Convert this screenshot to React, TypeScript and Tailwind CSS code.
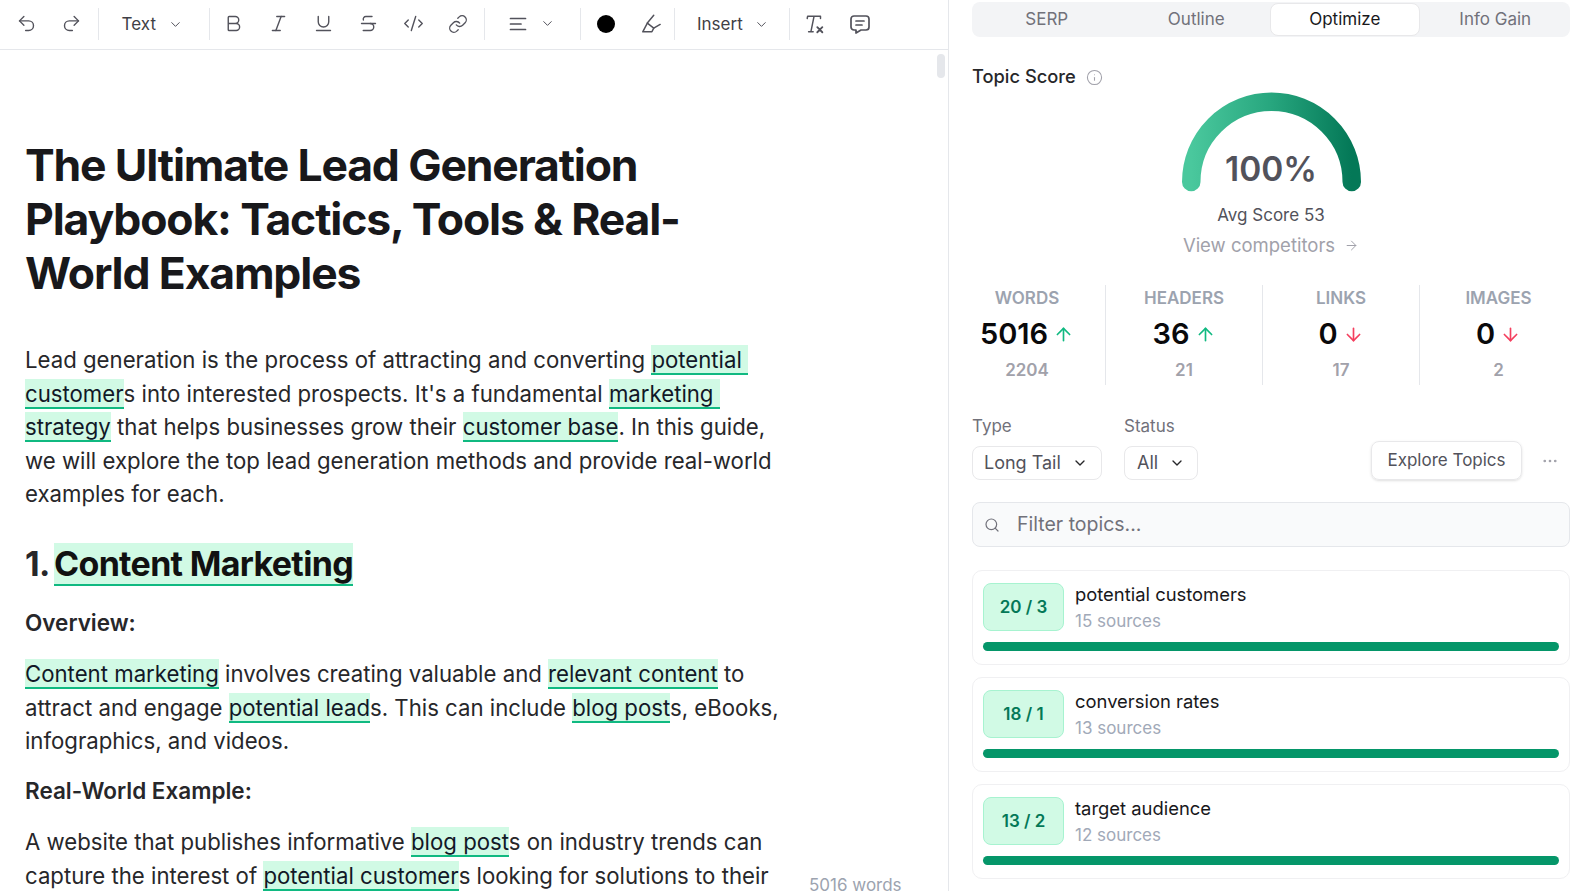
import { useId, type ReactNode } from "react";
import {
  ArrowDown,
  ArrowRight,
  ArrowUp,
  Bold,
  ChevronDown,
  CodeXml,
  Info,
  Italic,
  Link,
  MoreHorizontal,
  Redo2,
  Search,
  Strikethrough,
  Underline,
  Undo2,
} from "lucide-react";
import { TbMessage } from "react-icons/tb";

function Mark({ children }: { children: ReactNode }) {
  return (
    <mark className="bg-[#d1fae5] text-[#111827] border-b-2 border-[#10b981] pt-px whitespace-pre-wrap">{children}</mark>
  );
}

function Sep() {
  return <div className="w-px h-8 bg-[#e5e7eb] shrink-0" />;
}

function Btn({ children }: { children: ReactNode }) {
  return <div className="w-[44.8px] h-8 flex items-center justify-center text-[#52525b] shrink-0">{children}</div>;
}

function Toolbar() {
  return (
    <div className="h-[50px] border-b border-[#e5e7eb] flex items-center pl-1 pb-[2px] shrink-0">
      <Btn><Undo2 size={21} strokeWidth={1.6} /></Btn>
      <Btn><Redo2 size={21} strokeWidth={1.6} /></Btn>
      <div className="w-[4px]" />
      <Sep />
      <div className="flex items-center w-[110px] pl-[23px] pt-[2px] text-[17px] text-[#3f3f46]">
        Text
        <ChevronDown size={15} strokeWidth={1.6} className="ml-[12px] text-[#52525b]" />
      </div>
      <Sep />
      <div className="w-[2px]" />
      <Btn><Bold size={21} strokeWidth={1.6} /></Btn>
      <Btn><Italic size={21} strokeWidth={1.6} /></Btn>
      <Btn><Underline size={21} strokeWidth={1.6} /></Btn>
      <Btn><Strikethrough size={21} strokeWidth={1.6} /></Btn>
      <Btn><CodeXml size={21} strokeWidth={1.6} /></Btn>
      <Btn><Link size={20} strokeWidth={1.6} /></Btn>
      <div className="w-[4px]" />
      <Sep />
      <div className="flex items-center w-[95px] pl-[23px] text-[#52525b]">
        <svg width="20" height="20" viewBox="0 0 20 20" fill="none" stroke="currentColor" strokeWidth="1.7" strokeLinecap="round">
          <path d="M2.5 4.5h15M2.5 10h10.5M2.5 15.5h15" />
        </svg>
        <ChevronDown size={15} strokeWidth={1.6} className="ml-[12px]" />
      </div>
      <Sep />
      <div className="w-[2px]" />
      <Btn><div className="size-[18px] rounded-full bg-black" /></Btn>
      <Btn>
        <svg width="22" height="22" viewBox="0 0 24 24" fill="none" stroke="currentColor" strokeWidth="1.6" strokeLinecap="round" strokeLinejoin="round">
          <path d="M15 2.5 8 11l7 5.5 7-4" />
          <path d="M8 11 3 20.5h10l2-4" />
        </svg>
      </Btn>
      <div className="w-[1px]" />
      <Sep />
      <div className="flex items-center w-[114px] pl-[22px] pt-[2px] text-[17px] text-[#3f3f46]">
        Insert
        <ChevronDown size={15} strokeWidth={1.6} className="ml-[11px] text-[#52525b]" />
      </div>
      <Sep />
      <div className="w-[3px]" />
      <Btn>
        <svg width="22" height="22" viewBox="0 0 24 24" fill="none" stroke="currentColor" strokeWidth="1.6" strokeLinecap="round" strokeLinejoin="round">
          <path d="M4 3.5h14M4 3.5 3.5 6M18 3.5V6M11 3.5 7.5 20.5M5 20.5h5" />
          <path d="m14.5 15.5 5.5 5.5M20 15.5 14.5 21" strokeWidth="2" />
        </svg>
      </Btn>
      <Btn><TbMessage size={24} strokeWidth={1.7} /></Btn>
    </div>
  );
}

function Editor() {
  return (
    <div className="relative w-[949px] h-full border-r border-[#e5e7eb] flex flex-col shrink-0 overflow-hidden">
      <Toolbar />
      {/* scrollbar thumb */}
      <div className="absolute top-[54px] right-[3px] w-2 h-6 rounded-full bg-[#e5e7eb]" />
      <div className="w-[790px] pl-[25px] pt-[88px] text-[22.2px] leading-[33.5px] text-[#27272a]">
        <h1 className="text-[44.5px] leading-[54px] font-bold tracking-[-0.026em] text-[#18181b]">
          The Ultimate Lead Generation Playbook: Tactics, Tools &amp; Real-World Examples
        </h1>
        <p className="mt-[43px]">
          Lead generation is the process of attracting and converting <Mark>potential </Mark>
          <Mark>customer</Mark>s into interested prospects. It's a fundamental <Mark>marketing </Mark>
          <Mark>strategy</Mark> that helps businesses grow their <Mark>customer base</Mark>. In this guide, we will
          explore the top lead generation methods and provide real-world examples for each.
        </p>
        <h2 className="mt-[31px] text-[34px] leading-[44px] font-bold tracking-[-0.02em] text-[#27272a]">
          1. <mark className="-ml-[2px] bg-[#d1fae5] text-[#111] border-b-2 border-[#10b981]">Content Marketing</mark>
        </h2>
        <p className="mt-[20px] font-semibold text-[22.5px]">Overview:</p>
        <p className="mt-[18px]">
          <Mark>Content marketing</Mark> involves creating valuable and <Mark>relevant content</Mark> to attract and
          engage <Mark>potential lead</Mark>s. This can include <Mark>blog post</Mark>s, eBooks, infographics, and
          videos.
        </p>
        <p className="mt-[16px] font-semibold text-[22.5px]">Real-World Example:</p>
        <p className="mt-[18px]">
          A website that publishes informative <Mark>blog post</Mark>s on industry trends can capture the interest of{" "}
          <Mark>potential customer</Mark>s looking for solutions to their needs.
        </p>
      </div>
      {/* word count sits on top of the text */}
      <div className="absolute left-[809px] top-[873px] text-[17px] text-[#9ca3af] bg-white">5016 words</div>
    </div>
  );
}

function Stat({ label, value, up, target, last }: { label: string; value: string; up: boolean; target: string; last?: boolean }) {
  return (
    <div className={`h-[100px] flex flex-col items-center ${last ? "" : "border-r border-[#e5e7eb]"}`}>
      <div className="mt-[2px] text-[17px] leading-[22px] font-semibold text-[#9ca3af]">{label}</div>
      <div className="mt-[5px] flex items-center h-[40px]">
        <span className="text-[29px] font-semibold text-[#09090b]">{value}</span>
        {up ? (
          <ArrowUp size={21} strokeWidth={1.9} className="ml-[5px] mt-px text-[#10b981]" />
        ) : (
          <ArrowDown size={21} strokeWidth={1.9} className="ml-[5px] mt-px text-[#f43f5e]" />
        )}
      </div>
      <div className="mt-[5px] text-[17px] leading-[22px] font-semibold text-[#a1a1aa]">{target}</div>
    </div>
  );
}

function TopicCard({ score, title, sources }: { score: string; title: string; sources: string }) {
  return (
    <div className="h-[95px] rounded-[10px] border border-[#f0f0f2] px-[10px] pt-[12px] flex flex-col">
      <div className="flex">
        <div className="w-[81px] h-[48px] rounded-lg bg-[#d1fae5] border border-[#a7f3d0] flex items-center justify-center pt-[2px] text-[17px] font-semibold text-[#047857]">
          {score}
        </div>
        <div className="ml-[11px]">
          <div className="text-[18.4px] leading-[24px] -mt-px text-[#18181b]">{title}</div>
          <div className="text-[17px] leading-[24px] mt-[3px] text-[#a1a9b8]">{sources}</div>
        </div>
      </div>
      <div className="mt-[9px] h-[9px] rounded-full bg-[#059669]" />
    </div>
  );
}

function Gauge() {
  const id = useId();
  return (
    <div className="relative w-[179px] h-[100px] mx-auto">
      <svg width="179" height="100" viewBox="0 0 179 100" fill="none">
        <defs>
          <linearGradient id={id} x1="0" y1="0" x2="1" y2="0">
            <stop offset="0" stopColor="#4ac89d" />
            <stop offset="0.5" stopColor="#27a67e" />
            <stop offset="1" stopColor="#047857" />
          </linearGradient>
        </defs>
        <path d="M9.25 90A80.25 80.25 0 0 1 169.75 90" stroke={`url(#${id})`} strokeWidth="18.5" strokeLinecap="round" />
      </svg>
      <div className="absolute inset-x-0 top-[55px] text-center text-[33.5px] leading-[44px] font-semibold text-[#52525b]">
        100%
      </div>
    </div>
  );
}

function Sidebar() {
  return (
    <div className="flex-1 min-w-0 h-full overflow-hidden">
      <div className="pl-[23px] pr-2 pt-[2px]">
        <div className="h-[35px] rounded-lg bg-[#f3f4f6] grid grid-cols-4 text-[17px] text-[#71717a]">
          <div className="flex items-center justify-center">SERP</div>
          <div className="flex items-center justify-center">Outline</div>
          <div className="flex items-center justify-center bg-white rounded-lg border border-[#e8e8ea] text-[#18181b] m-px -ml-px">Optimize</div>
          <div className="flex items-center justify-center">Info Gain</div>
        </div>
        <div className="mt-[28px] flex items-center h-[24px]">
          <span className="text-[18.3px] font-medium text-[#27272a]">Topic Score</span>
          <Info size={17} strokeWidth={1.5} className="ml-[10px] text-[#a1a1aa]" />
        </div>
        <div className="mt-[3px]">
          <Gauge />
        </div>
        <div className="mt-[11px] text-center text-[17px] leading-[24px] text-[#52525b]">Avg Score 53</div>
        <div className="mt-[6px] flex items-center justify-center text-[18.5px] leading-[24px] text-[#a1a1aa]">
          View competitors
          <ArrowRight size={15} strokeWidth={1.6} className="ml-[9px]" />
        </div>
      </div>

      <div className="mt-[28px] grid grid-cols-4 w-[628px]">
        <Stat label="WORDS" value="5016" up target="2204" />
        <Stat label="HEADERS" value="36" up target="21" />
        <Stat label="LINKS" value="0" up={false} target="17" />
        <Stat label="IMAGES" value="0" up={false} target="2" last />
      </div>

      <div className="pl-[23px] pr-2">
        <div className="mt-[30px] flex items-end">
          <div>
            <div className="text-[17px] leading-[22px] text-[#71717a]">Type</div>
            <div className="mt-[9px] w-[130px] h-[34px] rounded-lg border border-[#e8e8ea] flex items-center pl-[11px] pb-px text-[18px] text-[#52525b]">
              Long Tail
              <ChevronDown size={16} strokeWidth={2} className="ml-[11px] text-[#27272a]" />
            </div>
          </div>
          <div className="ml-[22px]">
            <div className="text-[17px] leading-[22px] text-[#71717a]">Status</div>
            <div className="mt-[9px] w-[74px] h-[34px] rounded-lg border border-[#e8e8ea] flex items-center pl-[12px] pb-px text-[18px] text-[#52525b]">
              All
              <ChevronDown size={16} strokeWidth={2} className="ml-[11px] text-[#27272a]" />
            </div>
          </div>
          <div className="ml-auto w-[151px] h-[39px] rounded-lg border border-[#e8e8ea] shadow-sm flex items-center justify-center text-[17px] text-[#52525b]">
            Explore Topics
          </div>
          <div className="w-[48px] h-[39px] flex items-center justify-end pr-[11px] text-[#a1a1aa]">
            <MoreHorizontal size={18} strokeWidth={1.6} />
          </div>
        </div>

        <div className="mt-[22px] h-[45px] rounded-lg bg-[#f9fafb] border border-[#e5e7eb] flex items-center pl-[11px] text-[19.5px] text-[#71717a]">
          <Search size={16} strokeWidth={1.8} />
          <span className="ml-[17px]">Filter topics...</span>
        </div>

        <div className="mt-[23px] flex flex-col gap-[12px]">
          <TopicCard score="20 / 3" title="potential customers" sources="15 sources" />
          <TopicCard score="18 / 1" title="conversion rates" sources="13 sources" />
          <TopicCard score="13 / 2" title="target audience" sources="12 sources" />
          <TopicCard score="12 / 2" title="lead generation" sources="11 sources" />
        </div>
      </div>
    </div>
  );
}

export default function App() {
  return (
    <div className="w-[1578px] h-[891px] bg-white flex overflow-hidden font-['Inter',sans-serif]">
      <Editor />
      <Sidebar />
    </div>
  );
}
